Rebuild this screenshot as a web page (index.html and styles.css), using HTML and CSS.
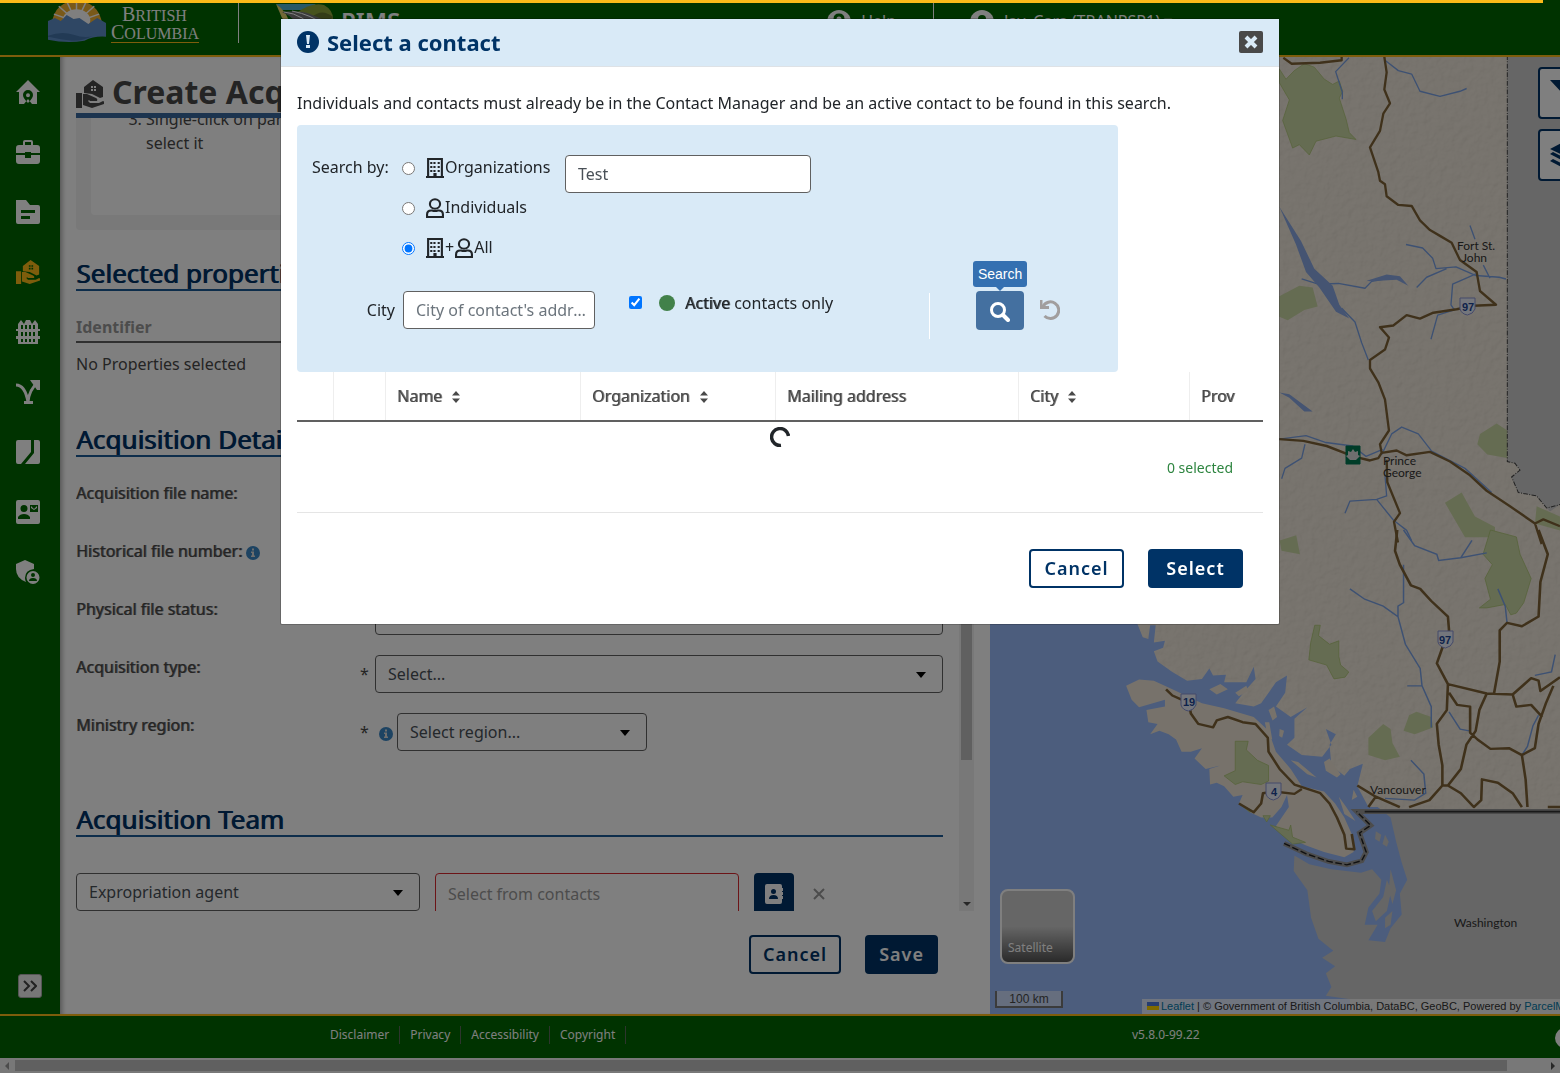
FILE: index.html
```html
<!DOCTYPE html>
<html lang="en">
<head>
<meta charset="utf-8">
<meta name="viewport" content="width=device-width, initial-scale=1">
<title>PIMS - Create Acquisition File</title>
<link rel="stylesheet" href="styles.css">
</head>
<body>
<svg class="sprite" aria-hidden="true">
  <symbol id="i-building" viewBox="0 0 17 20" preserveAspectRatio="none"><path fill="none" stroke="currentColor" stroke-width="2" d="M2 19V1h13v18M0 19h17"/><path fill="currentColor" d="M4 4h2v2H4zm3 0h2v2H7zm4 0h2v2h-2zM4 8h2v2H4zm3 0h2v2H7zm4 0h2v2h-2zm-7 4h2v2H4zm3 0h2v2H7zm4 0h2v2h-2zM7 15h3v4H7z"/></symbol>
  <symbol id="i-person" viewBox="0 0 17 20" preserveAspectRatio="none"><g fill="none" stroke="currentColor" stroke-width="2"><circle cx="8.500" cy="6" r="4.800"/><path d="M1 19v-2.500q0-4 4-4h.8q2.700 1.200 5.400 0h.8q4 0 4 4V19z"/></g></symbol>
  <symbol id="i-info" viewBox="0 0 14 14"><circle cx="7" cy="7" r="7" fill="#3b86c4"/><path fill="#ddd" d="M6 2.500h2v2H6zM5 5.500h3v4h1V11H5V9.500h1V7H5z"/></symbol>
  <symbol id="i-sort" viewBox="0 0 8 12"><path fill="currentColor" d="M4 0l4 4.500H0zM4 12l4-4.500H0z"/></symbol>
  <symbol id="i-hand-house" viewBox="0 0 28 28"><path fill="currentColor" d="M0 13h6v15H0zM8 7l9-7 10 7v10l-3 1-8-4-8-1zm7-1v2h2V6zm3 0v2h2V6zm-3 3v2h2V9zm3 0v2h2V9z" fill-rule="evenodd"/><path fill="currentColor" d="M7 14h4l9 4q2 1 1 3h-7l-1-1-1 1 2 2h9l4-2q2 1 1 3l-12 4-9-3z"/></symbol>
</svg>

<div class="loading-bar"></div>
<div class="app">
  <header class="topbar">
    <a class="brand" href="#" aria-label="British Columbia">
      <svg width="62" height="44" viewBox="0 0 62 44"><path fill="#f3b333" d="M5 24Q7 2 30 0q23 2 26 24z"/><g stroke="#fff" stroke-width="1.500"><path d="M30 22L12 6M30 22L20 1M30 22L30 0M30 22L40 1M30 22L48 6M30 22L7 14M30 22L53 14"/></g><ellipse cx="30" cy="20" rx="14" ry="11" fill="#fff"/><path fill="#5f8fc9" d="M1 21l7-3 6 3 6-6 7 4 6-1 9 6 9-6 9 5v14q-12-1-22 4-18 3-37-1z"/><path fill="#4474ab" d="M1 36q14-5 26-1t20 1q-12 6-22 5T1 37z"/></svg>
      <span class="brand-name"><span>B<small>RITISH</small></span><span>C<small>OLUMBIA</small></span></span>
    </a>
    <a class="product" href="#">
      <svg width="58" height="38" viewBox="0 0 58 38"><path fill="#4eb0cc" d="M0 4h40l-8 6H5z"/><path fill="#e5d36c" d="M0 4q12 8 14 22L6 18z"/><path fill="#8fa63a" d="M22 12Q36 2 48 5q9 5 9 14L26 24z"/><path fill="#68792e" d="M36 17Q46 8 57 17l-4 4-18 2z"/><path fill="#777" d="M6 12q18-2 28 2t18 8l-10 8-14 4q-8-16-22-22z"/><path fill="none" stroke="#fff" d="M8 12q20 2 32 20M16 11q20 4 32 14"/></svg>
      <span>PIMS</span>
    </a>
    <nav class="topbar-links">
      <a href="#"><svg width="24" height="24" viewBox="0 0 24 24"><circle cx="12" cy="12" r="12" fill="#fff"/><path d="M8 9q0-4 4-4t4 4q0 2-2 3t-2 3M12 17v2" fill="none" stroke="#060" stroke-width="3"/></svg>Help</a>
      <a href="#"><svg width="24" height="24" viewBox="0 0 24 24"><circle cx="12" cy="12" r="12" fill="#fff"/><circle cx="12" cy="9" r="4" fill="#060"/></svg>Jay, Cara (TRANPSP1) ▾</a>
    </nav>
  </header>

  <main class="workspace">
    <nav class="rail" aria-label="Modules">
      <a href="#" aria-label="Map"><svg viewBox="0 0 24 24"><path fill-rule="evenodd" fill="currentColor" d="M12 0l12 12h-3v12h-5l-4-5-4 5H3V12H0zM12 10a5 5 0 0 0-5 5q0 3 5 8 5-5 5-8a5 5 0 0 0-5-5zm0 3.200a2 2 0 1 1 0 4 2 2 0 0 1 0-4z"/></svg></a>
      <a href="#" aria-label="Projects"><svg viewBox="0 0 24 24"><path fill-rule="evenodd" fill="currentColor" d="M7 5V2q0-2 2-2h6q2 0 2 2v3h4q3 0 3 3v5h-9v-1H9v1H0V8q0-3 3-3zm2 0h6V2H9zM0 15h9v3h6v-3h9v6q0 3-3 3H3q-3 0-3-3z"/></svg></a>
      <a href="#" aria-label="Research"><svg viewBox="0 0 24 24"><path fill-rule="evenodd" fill="currentColor" d="M0 0h10l4 5h8q2 0 2 2v15q0 2-2 2H2q-2 0-2-2zm5 10v3h14v-3zm0 6v3h9v-3z"/></svg></a>
      <a class="current" href="#" aria-label="Acquisition"><svg><use href="#i-hand-house"/></svg></a>
      <a href="#" aria-label="Management"><svg viewBox="0 0 24 24"><path fill="currentColor" d="M0 9h24v2H0zm0 7h24v3H0zM2 24V4l3-4 3 4 2-4h4l2 4 3-4 3 4v20z"/><path fill="#060" d="M5 5h2v4H5zm4 0h2v4H9zm4 0h2v4h-2zm4 0h2v4h-2zM5 12h2v4H5zm4 0h2v4H9zm4 0h2v4h-2zm4 0h2v4h-2zM5 19h2v3H5zm4 0h2v3H9zm4 0h2v3h-2zm4 0h2v3h-2z"/></svg></a>
      <a href="#" aria-label="Lease"><svg viewBox="0 0 24 24"><path fill="none" stroke="currentColor" stroke-width="3" d="M0 5q9 0 12 17 1-12 10-20M8 22.500h9"/><path fill="currentColor" d="M14 0h10v10h-3z"/></svg></a>
      <a href="#" aria-label="Disposition"><svg viewBox="0 0 24 24"><path fill="currentColor" d="M2 0h13v12L5 24H2q-2 0-2-2V2q0-2 2-2zM18 0h4q2 0 2 2v20q0 2-2 2H9l9-11z"/></svg></a>
      <a href="#" aria-label="Contacts"><svg viewBox="0 0 24 24"><path fill-rule="evenodd" fill="currentColor" d="M2 0h20q2 0 2 2v20q0 2-2 2H2q-2 0-2-2V2q0-2 2-2zm6 5a3 3 0 1 0 0 7 3 3 0 0 0 0-7zM2 19h12v-2q-2-3-6-3t-6 3zM14 5v7h8V5zm1 1l3 3 3-3v2l-3 2-3-2z"/></svg></a>
      <a href="#" aria-label="Admin"><svg viewBox="0 0 24 24"><path fill="currentColor" d="M9 0l9 4v5q-9 1-9 9 0 2 1 4Q0 18 0 9V4z"/><path fill-rule="evenodd" fill="currentColor" d="M17 11a6.500 6.500 0 1 0 0 13 6.500 6.500 0 0 0 0-13zm0 2a2 2 0 1 1 0 4 2 2 0 0 1 0-4zm-4 8q0-3 4-3t4 3z"/></svg></a>
      <button class="rail-toggle" type="button" aria-label="Expand"><svg width="14" height="12" viewBox="0 0 14 12"><path d="M1 1l5 5-5 5M8 1l5 5-5 5" fill="none" stroke="#444" stroke-width="2"/></svg></button>
    </nav>

    <section class="panel">
      <h1 class="panel-title"><svg width="28" height="28"><use href="#i-hand-house"/></svg>Create Acquisition File</h1>
      <div class="panel-scroll">
        <div class="panel-content">
          <div class="hint"><ol start="3"><li>Single-click on parcels to<br>select it</li></ol></div>
          <h2>Selected properties</h2>
          <table class="props"><thead><tr><th>Identifier</th></tr></thead><tbody><tr><td>No Properties selected</td></tr></tbody></table>
          <h2>Acquisition Details</h2>
          <div class="row"><label for="fname">Acquisition file name:</label><span class="req">*</span><input id="fname" type="text"></div>
          <div class="row"><label for="hist">Historical file number: <svg width="14" height="14"><use href="#i-info"/></svg></label><span class="req"></span><input id="hist" type="text"></div>
          <div class="row"><label for="status">Physical file status:</label><span class="req"></span><select id="status"><option>Select...</option></select></div>
          <div class="row"><label for="type">Acquisition type:</label><span class="req">*</span><select id="type"><option>Select...</option></select></div>
          <div class="row"><label for="region">Ministry region:</label><span class="req">*</span><svg class="row-info" width="14" height="14"><use href="#i-info"/></svg><select class="narrow" id="region"><option>Select region...</option></select></div>
          <h2>Acquisition Team</h2>
          <div class="team">
            <select class="role" aria-label="Team role"><option>Expropriation agent</option></select>
            <input class="invalid" type="text" placeholder="Select from contacts" aria-label="Contact">
            <button class="book" type="button" aria-label="Open contacts"><svg width="18" height="20" viewBox="0 0 18 20"><path fill-rule="evenodd" fill="#fff" d="M2 0h13q2 0 2 2v2h1v3h-1v1h1v3h-1v1h1v3h-1v3q0 2-2 2H2q-2 0-2-2V2q0-2 2-2zm6.500 5a2.500 2.500 0 1 0 0 5 2.500 2.500 0 0 0 0-5zM4 15h9q0-4-4.500-4T4 15z"/></svg></button>
            <button class="remove" type="button" aria-label="Remove"><svg width="12" height="12" viewBox="0 0 12 12"><path d="M1 1l10 10M11 1L1 11" stroke="#999" stroke-width="2"/></svg></button>
          </div>
        </div>
        <div class="vbar"><i></i><b></b></div>
      </div>
      <div class="panel-actions"><button class="btn outline" type="button">Cancel</button><button class="btn solid" type="button">Save</button></div>
    </section>

    <section class="map" aria-label="Map">
      <svg class="map-art" viewBox="990 57 570 957" preserveAspectRatio="xMinYMin slice">
        <defs>
          <filter id="relief" x="0" y="0" width="1" height="1"><feTurbulence type="fractalNoise" baseFrequency="0.14" numOctaves="4" seed="4"/><feDiffuseLighting lighting-color="#fff" surfaceScale="2"><feDistantLight azimuth="225" elevation="55"/></feDiffuseLighting></filter>
        </defs>
        <rect x="990" y="57" width="570" height="957" fill="#f1e8da"/>
        <rect x="990" y="57" width="570" height="957" filter="url(#relief)" opacity=".13"/>
        <g transform="translate(1270 0) scale(.3333 .3444)">
          <path fill="#ccc" d="M712 160H870V1465L840 1485 800 1440 745 1430 725 1385 750 1365 735 1345 712 1340z"/>
          <g fill="#cbd8a4" stroke="#a9c46e" stroke-width="2"><path d="M28 200l20 30 25-25 30-20 30 10 30 35 25 15 20-10 10 30-10 20 20 60 10 40 20 20-60-10-60 15-20 40-30-30-20 10-30-80 20-60-30-50z"/><path stroke="none" d="M28 860l60-30 40 5 15 55-40 10-50 30-25-10zM630 1260l50-30 32 20v80l-60-10-30-30zM525 1460l50-30 40 70 60 30v30h-90zM800 1470l70 30v40l-75-20z"/></g>
          <g fill="none" stroke="#7aa2e6" stroke-width="4" stroke-linejoin="round"><path d="M345 175l40 30 40 10 25 50 60 15 60-15 20-8M237 168l-40 40 20 60v20M408 710l50 10 30 30 10 30 60-5 60 25 70 5 20 5M440 835l30-30 60-25M618 795l-70 30-5 60 10 15-50 15-20 70M600 655l15 40M640 770l20 38M95 810l50 15 60-2 80 14 20-20 60-10M215 895l40 40 20 60 20 50M335 1320l30-60 30-20 50 20 40 50 100 50 80 70M28 1275l80-10 60 20 80 10 40 30 50-20M105 1290l-10 40-50 30-10 30M345 1380l5 60-30 10-80 5-15 35M320 1450l50 60 40 30 15 30"/></g>
          <g fill="#8aa8e4"><path d="M28 600l65 100 40 80 55 50 20 55 30 40-40-20-50-70-40-45-30-80z"/><path d="M290 815l60-18 40 5 25 28-35-18-80 5zM28 1140l30 5 70 50h-25l-45-40z"/></g>
          <g fill="none" stroke="#7f6336" stroke-width="7" stroke-linejoin="round"><path d="M343 165l7 45-7 50 17 40-20 30-10 50-30 48 25 72 5 25 15 10 5 35 35 25 40 3 25 42 30 28 30 17 35 20 25 50 50 35 10 55 48 40-68 3-50 10-70 10-40 17-40-10-40 30-40 5 27 30-12 35-45 30v25l25 40 20 50 12 90-27 40 5 25 45-7 30 14 70-10 60 28 60 40 50 45 70 45 75 50 20 60M795 1520l25-12 50 20M28 1275l72 5 70 15 80 30 50 12 25-7 10-15M350 1335l2 65 38 90-18 25 12 60M40 168l25 17 85-3 65-7V160"/></g>
          <path fill="none" stroke="#444" stroke-width="3" stroke-dasharray="14 4 3 4" d="M712 160V1340l23 5 15 20-25 20 20 45 55 10 30 35 40-10"/>
        </g>
        <g transform="translate(980 530) scale(.3699 .3463)">
          <path fill="#ccc" d="M840 810H1568V1400H840z"/>
          <path fill="#98bafa" d="M27 0H425V270l15 40 15 5 5-40h15l-5 50 30-5-5 20-25 10 10 30 40 30 40 25 40-5 20-30 10 20 35-2-5 22 60 0 20-45 5 35-25 30-30 40 50 10 20-10 40-60 30-20-5 50-25 40 40 30 45-28-35 33v55l-20 20 40 30 55 5 25-35-15-45 27 15-17 30 5 60 35 30 15-20 35-15-15 65 30 60h25l35 30 15 70 15 60 15 50-20 40 5 60-30 40-15 40-45-5 25-45h-35l10-50 30-40 5-40-25-30-30 10-80-10-60-15-40-25-2 45 37 55 10 80 20 60 40 35-30 20 35 25-25 20 15 40-15 25 65 10v50H27z"/>
          <path fill="#eee5d7" d="M395 450l35-18 40 3 50 25 40 20 40 20 60 15 80 25 40 40 20 60 40 50 30 50 60 15 30 35 25 40 25 60v40l-25 15-55-15-50-20-40-20-40-35 35-55-5-35-15 35-25 30h-30l-30-15-30-25 10-25-25 5-25-30-20-10-18 5-2-45 30-10-40 10-30-30 20-30-30 10h-25l-15-35-20-15-25-10-25 10 20-30-25-5-5-35 50-10v-20l-70 22-20-22zM620 460l30-15 20 15-30 15zM690 470l30-20 5 15-25 15zM840 665l20 5 50 45-25-10zM930 670l15-10 30 45-10 10-30-20zM780 520l15-10 8 30-12 10zM770 555l12 0 8 50-12-10zM810 575l12 5-5 20-8-5zM970 770l20 30 25 40-30-20zM1010 750l10 20-15 10z"/>
          <path fill="#ccc" d="M1070 870l15 10-5 20-12-8zM1095 880l10 20-5 15-12-8zM1060 1100l30-40 10-50 12 30-12 60-30 30zM1110 980l15 60-10 40-10-40zM1095 1120l20-20-5 40-15 10z"/>
          <g fill="#cbd8a4" stroke="#a9c46e" stroke-width="2"><path d="M905 275l15 0-5 30 30 25 25-10v45l5 25 22 20-10 15-30 5-20-40-48-15 5-50zM1380 0l70 20 10 50 30 70-20 70-20 30-15 5-15-30-50 10-20 0 30-25-15-60 20-40-25-30z"/><path stroke="none" d="M810 30l45-15 10 55-50-10zM1160 535l20-10 40 15 5 30-50 20-30-10zM1050 600l40-40 20 15 5 40 20 40-40 10-45-15z"/><path d="M690 610h35l-5 25 30 30 30 15 0 45-20 10-50-8-20 8-30-25 30-15zM785 852l50 15 5-15 5 35 35 15-35 5zM765 825l20 0-10 18zM700 790l35 20-5 5z"/></g>
          <g fill="none" stroke="#7aa2e6" stroke-width="4"><path d="M1000 170l40 30 50 20 40 30 20 80 40 70 5 50-40 0M1145 100v110l-15 10v30M1145 0l30 45 60 25 5 18 60-8 70-14M1300 80l30-50M1195 450l25 60v60M1268 525l30 50 25 5M1165 665l35 40 5 55-30 20-80-5M1465 650l15-25 15-60 15-30M1500 420l45-10 10-50M1400 170l20 50 5 50"/></g>
          <g fill="none" stroke="#7f6336" stroke-width="7" stroke-linejoin="round"><path d="M503 460l17 18 25 12 20 10 5 30 20 30 40 10 10-20 30-10 40 15 35 5 33 40 2 40 30 50 40 45 70 25 25 30 20 40 20 50 5 40 22 2-7-44M870 748l-20 14-55-7-30 5-5 30-20 25-40-25M1128 0l-6 60 13 40 30 60 25 10 30 35 45 45 3 40-18 50-15 45 30 60 105 27 70 3 50-47 20 7 5 30 53-40M1265 445l-3 75-27 40 5 60 10 60v58h15l35-48 15-70 25-40 10-60 20-48M1390 470l15-90v-90l20-22 40 10 45-28 5-100 20-80-25-70M1268 470l22 35 35 5v75l20 20 35 27 50-2 35 20 35-20 10-70 20-60 20-50M1440 475l10 35 40-5 30 35M1465 650l10 70 5 80M1250 738l-35 42-55 20M1265 738l35 22 35 40 20-20 2-60 43 10 40 30 25 40M1020 738l50 32 65 30M1050 800l20-30M1535 800h33"/></g>
          <g fill="none"><path stroke="#999" stroke-width="14" d="M822 905l60 30 60 22 50 10 40-12 12-25-18-55 30-22-38-40h550"/><path stroke="#222" stroke-width="4" stroke-dasharray="18 7" d="M822 905l60 30 60 22 50 10 40-12 12-25-18-55 30-22-38-40"/><path stroke="#333" stroke-width="5" d="M1040 813h528"/></g>
        </g>
        <g class="shields"><path d="M1460 298h15v11q-2 5-7.500 6-6-1-7.500-6zM1438 631h15v11q-2 5-7.500 6-6-1-7.500-6zM1181 694h15v11q-2 5-7.500 6-6-1-7.500-6zM1266 783h15v11q-2 5-7.500 6-6-1-7.500-6z"/><path class="trans-canada" d="M1346 446h14v18h-14z"/><path class="leaf" d="M1353 449l2 3 3-1v4l2 1-4 4h-6l-4-4 2-1v-4l3 1z"/><text x="1462" y="311">97</text><text x="1439" y="644">97</text><text x="1183" y="706">19</text><text x="1271" y="796">4</text></g>
        <g class="places"><text x="1457" y="250">Fort St.</text><text x="1462" y="262">John</text><text x="1383" y="465">Prince</text><text x="1383" y="477">George</text><text x="1370" y="794">Vancouver</text><text x="1454" y="927">Washington</text></g>
      </svg>
      <div class="map-tools">
        <button type="button" aria-label="Filter"><svg width="30" height="26" viewBox="0 0 30 26"><path fill="#036" d="M0 0h30L18 13v13l-6-5v-8z"/></svg></button>
        <button type="button" aria-label="Layers"><svg width="30" height="28" viewBox="0 0 30 28"><path fill="#036" d="M0 8l15-8 15 8-15 7zM0 13l3-2 12 6 12-6 3 2-15 8zM0 20l3-2 12 6 12-6 3 2-15 8z"/></svg></button>
      </div>
      <button class="basemap" type="button">Satellite</button>
      <div class="scale">100 km</div>
      <div class="credit"><svg width="12" height="8" viewBox="0 0 12 8"><path fill="#4c7be1" d="M0 0h12v4H0z"/><path fill="#ffd500" d="M0 4h12v4H0z"/></svg><a href="#">Leaflet</a> | © Government of British Columbia, DataBC, GeoBC, Powered by <a href="#">ParcelMap BC</a></div>
    </section>
  </main>

  <footer class="footer">
    <nav><a href="#">Disclaimer</a><a href="#">Privacy</a><a href="#">Accessibility</a><a href="#">Copyright</a></nav>
    <span class="version">v5.8.0-99.22</span>
    <svg class="footer-help" width="20" height="20" viewBox="0 0 20 20"><circle cx="10" cy="10" r="10" fill="#fff"/><path d="M7 8q0-3 3-3t3 3q0 1-1.500 2T10 12M10 14v2" fill="none" stroke="#060" stroke-width="2"/></svg>
  </footer>
  <div class="hbar"><b></b><i></i><b class="end"></b></div>
</div>

<div class="backdrop">
  <div class="modal" role="dialog" aria-labelledby="modal-title">
    <div class="modal-head">
      <svg width="22" height="22" viewBox="0 0 22 22"><circle cx="11" cy="11" r="11" fill="#036"/><path fill="#d9eaf7" d="M9 4h4l-1 9h-2zM9 14h4v3H9z"/></svg>
      <h2 id="modal-title">Select a contact</h2>
      <button class="close" type="button" aria-label="Close"><svg width="24" height="22" viewBox="0 0 24 22"><rect width="24" height="22" rx="2" fill="#494949"/><path stroke="#d9eaf7" stroke-width="4" d="M7 6l10 10M17 6L7 16"/></svg></button>
    </div>
    <div class="modal-body">
      <p>Individuals and contacts must already be in the Contact Manager and be an active contact to be found in this search.</p>
      <form class="filter">
        <div class="filter-fields">
          <div class="by">
            <span>Search by:</span>
            <div class="options">
              <label><input type="radio" name="by"><svg width="18" height="20"><use href="#i-building"/></svg>Organizations</label>
              <label><input type="radio" name="by"><svg width="18" height="20"><use href="#i-person"/></svg>Individuals</label>
              <label><input type="radio" name="by" checked><svg width="18" height="20"><use href="#i-building"/></svg>+<svg width="18" height="20"><use href="#i-person"/></svg>All</label>
            </div>
            <input class="summary" type="text" value="Test" aria-label="Name">
          </div>
          <div class="where">
            <label class="city-label" for="city">City</label>
            <input id="city" type="text" placeholder="City of contact's address">
            <label class="active"><input type="checkbox" checked><i class="dot"></i><span><strong>Active</strong> contacts only</span></label>
          </div>
        </div>
        <div class="filter-actions">
          <button class="search" type="button" aria-label="Search"><svg width="20" height="20" viewBox="0 0 20 20"><circle cx="8" cy="8" r="6.500" fill="none" stroke="#fff" stroke-width="3"/><path d="M13 13l5 5" stroke="#fff" stroke-width="4" stroke-linecap="round"/></svg><span class="tip" role="tooltip">Search</span></button>
          <button class="reset" type="button" aria-label="Reset"><svg width="20" height="20" viewBox="0 0 20 20"><path d="M3 6.500A8.300 8.300 0 1 1 4.500 16" fill="none" stroke="#a19e9e" stroke-width="3"/><path d="M0 0h2.500v6H9v3H0z" fill="#a19e9e"/></svg></button>
        </div>
      </form>
      <table class="contacts">
        <colgroup><col class="c-pick"><col class="c-kind"><col class="c-name"><col class="c-name"><col class="c-mail"><col class="c-city"><col></colgroup>
        <thead><tr><th></th><th></th><th>Name<svg width="8" height="12"><use href="#i-sort"/></svg></th><th>Organization<svg width="8" height="12"><use href="#i-sort"/></svg></th><th>Mailing address</th><th>City<svg width="8" height="12"><use href="#i-sort"/></svg></th><th>Prov</th></tr></thead>
      </table>
      <div class="busy"><svg width="20" height="20" viewBox="0 0 20 20"><path d="M18.500 9A8.500 8.500 0 1 0 11 18.500" fill="none" stroke="#212529" stroke-width="3.500"/></svg></div>
      <div class="count">0 selected</div>
      <hr>
      <div class="modal-actions"><button class="btn outline" type="button">Cancel</button><button class="btn solid" type="button">Select</button></div>
    </div>
  </div>
</div>
</body>
</html>
```
FILE: styles.css
```css
* { box-sizing: border-box; }
body { margin: 0; font: 16px/24px "Noto Sans", sans-serif; color: #494949; background: #fff; }
h1, h2, p { margin: 0; }
a { color: inherit; text-decoration: none; }
button { font: inherit; padding: 0; border: 0; background: none; cursor: pointer; }
svg { flex: none; }
.sprite { position: absolute; width: 0; height: 0; }
.loading-bar { position: fixed; top: 0; left: 0; right: 17px; height: 3px; background: #fcba19; z-index: 20; }

.app { display: flex; flex-direction: column; height: 100vh; overflow: hidden; }
.topbar { flex: none; display: flex; align-items: flex-start; height: 57px; background: #060; border-bottom: 2px solid #fcba19; color: #fff; overflow: hidden; }
.brand { display: flex; width: 239px; height: 43px; padding-left: 47px; border-right: 1px solid #fff; }
.brand svg { width: 61px; }
.brand-name { display: flex; flex-direction: column; align-self: flex-start; margin: 6px 0 0 3px; font: 20px/17px "Liberation Serif", serif; border-bottom: 1px solid #fcba19; }
.brand-name span:first-child { padding-left: 11px; }
.brand-name small { font-size: 16px; }
.product { display: flex; margin-left: 37px; gap: 7px; font-size: 24px; font-weight: 600; line-height: 42px; }
.topbar-links { display: flex; margin-left: 427px; line-height: 42px; }
.topbar-links a { display: flex; gap: 10px; padding-right: 37px; margin-right: 36px; border-right: 1px solid #fff; }
.topbar-links a:last-child { border: 0; }
.topbar-links svg { margin-top: 10px; }

.workspace { flex: 1; min-height: 0; display: flex; }
.rail { flex: none; display: flex; flex-direction: column; width: 60px; padding: 23px 0 16px 16px; gap: 36px; background: #060; color: #fff; }
.rail a { height: 24px; }
.rail a svg { width: 24px; height: 24px; }
.rail .current { color: #fcba19; }
.rail-toggle { display: grid; place-items: center; width: 24px; height: 24px; margin: auto 0 0 2px; background: #eee; border: 1px solid #aaa; border-radius: 3px; }

.panel { flex: none; display: flex; flex-direction: column; width: 930px; padding: 16px; background: #fff; box-shadow: inset 5px 0 5px -3px #aaa; }
.panel-title { flex: none; display: flex; align-items: center; gap: 8px; height: 45px; padding-bottom: 3px; border-bottom: 5px solid #38699f; font-size: 32px; font-weight: 700; line-height: 37px; }
.panel-title svg { margin-top: 4px; }
.panel-scroll { flex: 1; min-height: 0; display: flex; gap: 16px; overflow: hidden; }
.panel-content { flex: 1; min-width: 0; }
.hint { height: 123px; margin-top: -11px; padding: 0 15px 15px; background: #f2f2f2; border-radius: 0 0 4px 4px; }
.hint ol { height: 108px; margin: 0; padding-left: 55px; background: #fff; border-radius: 0 0 4px 4px; }
.panel h2 { height: 34px; border-bottom: 2px solid #1a5a96; color: #036; font-size: 26px; font-weight: 400; line-height: 32px; text-shadow: 1px 0 #036; }
.hint + h2 { margin-top: 27px; }
.props { width: 100%; border-collapse: collapse; margin: 24px 0 38px; text-align: left; }
.props th { height: 26px; padding: 0 0 2px; color: #999; border-bottom: 2px solid #606060; }
.props td { height: 43px; padding: 0; }
.row { display: flex; height: 38px; margin-bottom: 20px; }
.props + h2 { margin-bottom: 24px; }
.row label { width: 284px; line-height: 24px; }
.row label, .active strong, .contacts th { font-weight: 400; text-shadow: 1px 0 #494949b0; }
.row label svg { vertical-align: -3px; }
.row .req { width: 15px; line-height: 38px; }
.row-info { margin: 14px 4px 0; }
.row input, .row select { flex: 1; min-width: 0; }
.row .narrow { flex: none; width: 250px; }
.row + h2 { margin-top: 52px; }
input[type="text"], select { height: 38px; padding: 6px 12px; border: 1px solid #606060; border-radius: 4px; background: #fff; color: #495057; font: inherit; text-overflow: ellipsis; }
input::placeholder { color: #6c757d; opacity: 1; }
select { appearance: none; background: #fff url("data:image/svg+xml,%3Csvg xmlns='http://www.w3.org/2000/svg' width='12' height='8'%3E%3Cpath d='M1 2h10L6 8z'/%3E%3C/svg%3E") no-repeat right 15px center; }
.team { display: flex; margin-top: 36px; gap: 15px; }
.team .role { width: 344px; }
.team input.invalid { width: 304px; height: 42px; border-color: #d8292f; }
.team input::placeholder { color: #999; }
.book { display: grid; place-items: center; width: 40px; height: 42px; background: #036; border-radius: 4px; }
.remove { display: grid; place-items: center; width: 20px; height: 42px; }
.vbar { display: flex; flex-direction: column; align-items: center; justify-content: space-between; width: 15px; background: #f1f1f1; }
.vbar i { width: 11px; height: 642px; background: #c1c1c1; }
.vbar b { margin-bottom: 5px; border: 4px solid transparent; border-top-color: #505050; border-bottom: 0; }
.panel-actions { flex: none; display: flex; justify-content: flex-end; gap: 24px; height: 87px; padding: 24px 36px 24px 0; }
.btn { height: 39px; min-width: 71px; padding: 0 12px; border: 2px solid #036; border-radius: 4px; font-size: 18px; font-weight: 600; letter-spacing: 1px; line-height: 35px; }
.btn.outline { color: #036; background: #fff; }
.btn.solid { color: #fff; background: #036; }

.map { flex: 1; min-width: 0; position: relative; overflow: hidden; }
.map-art { display: block; width: 100%; height: 100%; }
.shields path { fill: #e8edf8; stroke: #8a94d4; }
.shields .trans-canada { fill: #007a50; stroke: #075; }
.shields .leaf { fill: #ddd; stroke: none; }
.shields text { font: 700 11px "Liberation Sans", sans-serif; fill: #1d4596; }
.places text { font: 12px Lato, sans-serif; fill: #333; }
.map-tools { position: absolute; top: 10px; right: -32px; display: grid; gap: 10px; }
.map-tools button { display: grid; place-items: center; width: 54px; height: 52px; background: #fff; border: 2px solid #036; border-radius: 4px; }
.basemap { position: absolute; left: 10px; bottom: 50px; width: 75px; height: 75px; padding: 42px 6px 0; border: 2px solid #fff; border-radius: 8px; background: linear-gradient(#ccc 50%, #555); color: #fff; font-size: 12px; line-height: 16px; text-align: left; }
.scale { position: absolute; left: 5px; bottom: 6px; width: 68px; height: 17px; border: 2px solid #777; border-top: 0; background: #ffffff80; font: 12px/17px "Liberation Sans", sans-serif; text-align: center; }
.credit { position: absolute; left: 152px; bottom: 0; padding: 0 5px; background: #ffffffb3; color: #333; font: 11px/15px "Liberation Sans", sans-serif; white-space: nowrap; }
.credit svg { margin-right: 2px; }
.credit a { color: #0078a8; }

.footer { flex: none; display: flex; height: 44px; padding: 10px 0 14px 330px; background: #060; border-top: 2px solid #fcba19; color: #fff; font-size: 12px; line-height: 18px; overflow: hidden; }
.footer nav { flex: none; display: flex; width: 802px; }
.footer a { padding-right: 10px; margin-right: 10px; border-right: 1px solid #5a6b5a; }
.version { flex: none; width: 423px; }
.footer-help { margin-top: 2px; }
.hbar { flex: none; display: flex; align-items: center; justify-content: space-between; height: 15px; padding: 0 5px; background: #f1f1f1; }
.hbar i { flex: 1; height: 11px; margin: 0 44px 0 6px; background: #c1c1c1; }
.hbar b { border: 4px solid transparent; border-right-color: #999; border-left: 0; }
.hbar .end { border: 4px solid transparent; border-left-color: #505050; border-right: 0; }

.backdrop { position: fixed; inset: 0; z-index: 10; padding: 18px 16px; background: #00000080; color: #212529; }
.modal { max-width: 1000px; margin: 0 auto; border: 1px solid #00000033; background: #fff; background-clip: padding-box; border-radius: 2px; }
.modal-head { display: flex; align-items: center; gap: 8px; height: 48px; padding: 0 16px 2px; background: #d9eaf7; border-bottom: 1px solid #dee2e6; }
.modal-head h2 { flex: 1; color: #036; font-size: 22px; line-height: 26px; }
.close { height: 22px; }
.close svg { display: block; }
.modal-body { padding: 24px 16px 36px; }
.filter { display: flex; width: 85%; height: 247px; margin-top: 10px; padding: 30px 15px; background: #d9eaf7; border-radius: 4px; }
.filter-fields { flex: 1; }
.by { display: flex; height: 136px; }
.by > span { width: 90px; }
.options { width: 163px; }
.options label { display: flex; align-items: center; height: 24px; margin-bottom: 16px; white-space: nowrap; }
.options input { margin: 2px 10px 0 0; }
.options label svg { margin: 2px 1px 0; }
.summary { width: 246px; }
.where { display: flex; align-items: flex-start; }
.city-label { width: 91px; padding-right: 8px; line-height: 38px; text-align: right; }
.where input[type="text"] { width: 192px; padding-right: 4px; }
.active { display: flex; align-items: center; margin-left: 34px; }
.active input { margin: 0 0 2px; }
.active strong { text-shadow: 1px 0 #212529b0; }
.dot { width: 16px; height: 16px; margin: 0 10px 0 17px; border-radius: 50%; background: #42814a; }
.filter-actions { flex: none; display: flex; align-items: flex-start; width: 174px; height: 46px; margin-top: 138px; padding-left: 46px; gap: 16px; border-left: 1px solid #fff; }
.search { position: relative; display: grid; place-items: center; width: 48px; height: 39px; margin-top: -2px; padding-top: 3px; background: #4470a0; border-radius: 4px; }
.tip { position: absolute; bottom: 43px; left: -3px; width: 54px; padding: 4px 0; background: #3470b1; border-radius: 3px; color: #fff; font: 14px/18px "Liberation Sans", sans-serif; }
.tip::after { content: ""; position: absolute; top: 100%; left: 23px; border: 4px solid transparent; border-top-color: #3470b1; border-bottom: 0; }
.reset { padding-top: 7px; height: 27px; }
.reset svg { display: block; }
.contacts { width: 100%; table-layout: fixed; border-collapse: separate; border-spacing: 0; border-bottom: 2px solid #606060; }
.contacts th { height: 48px; padding: 0 11px; color: #494949; text-align: left; white-space: nowrap; border-right: 1px solid #eee; }
.contacts th:last-child { border: 0; }
.contacts th svg { margin-left: 10px; vertical-align: -1px; }
.c-pick { width: 37px; }
.c-kind { width: 52px; }
.c-name { width: 195px; }
.c-mail { width: 243px; }
.c-city { width: 171px; }
.busy { display: flex; justify-content: center; padding-top: 5px; }
.count { margin: 9px 30px 0; color: #2e8540; font-size: 14px; text-align: right; }
hr { margin: 32px 0 36px; border: 0; border-top: 1px solid #e5e5e5; }
.modal-actions { display: flex; justify-content: flex-end; gap: 24px; padding-right: 20px; }
.modal-actions .btn { width: 95px; }
```
